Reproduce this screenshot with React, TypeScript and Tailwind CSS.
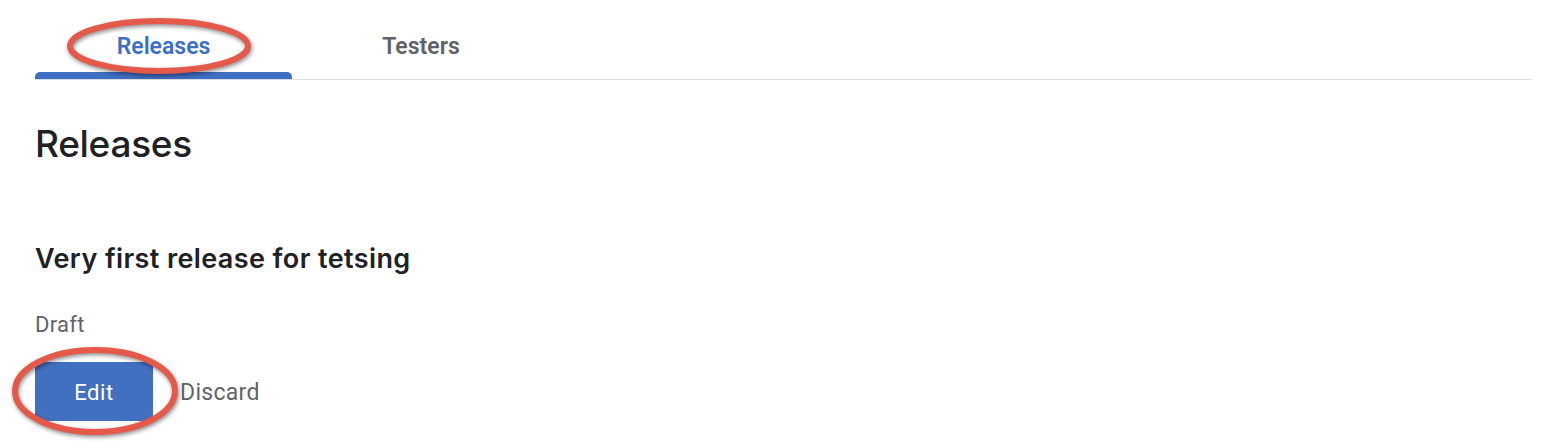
import React from 'react';

const Ring = ({ className, w, h }: { className: string; w: number; h: number }) => (
  <svg
    className={className}
    width={w}
    height={h}
    viewBox={`0 0 ${w} ${h}`}
    fill="none"
    style={{ filter: 'drop-shadow(1px 2px 2px rgba(0,0,0,0.45))' }}
  >
    <ellipse cx={w / 2} cy={h / 2} rx={w / 2 - 5} ry={h / 2 - 5} stroke="#e5594a" strokeWidth={6} />
  </svg>
);

const App = () => {
  return (
    <div className="relative w-full h-[441px] bg-white overflow-hidden pl-[35px] pr-[16px] font-['Inter',sans-serif]">
      <div className="flex border-b border-[#dadce0]">
        <div className="w-[257px] h-[79px] flex flex-col justify-between items-center">
          <span className="mt-[33px] text-[23px] leading-[28px] font-semibold text-[#3d6fc3] font-['Roboto',sans-serif]">
            Releases
          </span>
          <div className="w-full h-[7px] bg-[#3f6fc2] rounded-t-[5px]" />
        </div>
        <div className="w-[258px] h-[79px] flex justify-center">
          <span className="mt-[33px] text-[23px] leading-[28px] font-semibold text-[#5f6368] font-['Roboto',sans-serif]">
            Testers
          </span>
        </div>
      </div>

      <h1 className="mt-[42px] text-[37px] leading-[44px] font-medium text-[#202124] tracking-[-0.3px]">Releases</h1>

      <h2 className="mt-[77px] text-[27px] leading-[32px] font-semibold text-[#202124] tracking-[0.4px]">
        Very first release for tetsing
      </h2>

      <div className="mt-[38px] text-[22px] leading-[24px] text-[#5f6368] font-['Roboto',sans-serif] tracking-[0.3px]">
        Draft
      </div>

      <div className="mt-[25px] flex items-center gap-[27px]">
        <button className="w-[118px] h-[59px] pt-[2px] bg-[#4270c0] rounded-[3px] text-white text-[22px] font-normal font-['Roboto',sans-serif] tracking-[0.6px]">
          Edit
        </button>
        <span className="pt-[4px] text-[23px] text-[#5f6368] font-['Roboto',sans-serif] tracking-[0.3px]">Discard</span>
      </div>

      <Ring className="absolute left-[65px] top-[16px]" w={188} h={60} />
      <Ring className="absolute left-[10px] top-[345px]" w={170} h={92} />
    </div>
  );
};

export default App;
